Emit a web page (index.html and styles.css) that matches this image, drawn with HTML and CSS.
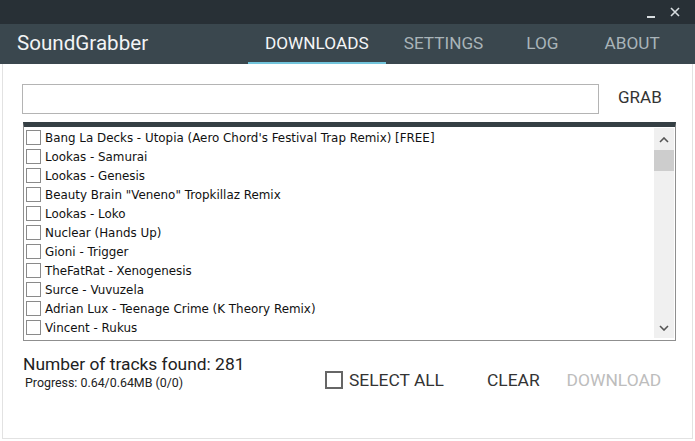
FILE: index.html
```html
<!DOCTYPE html>
<html>
<head>
<meta charset="utf-8">
<link rel="stylesheet" href="styles.css">
</head>
<body>
<div class="window">
  <div class="titlebar">
    <span class="ctl min"></span>
    <span class="ctl close">
      <svg width="10" height="10" viewBox="0 0 10 10"><path d="M1 1 L9 9 M9 1 L1 9" stroke="#d8dde0" stroke-width="1.6" fill="none"/></svg>
    </span>
  </div>
  <div class="header">
    <div class="brand">SoundGrabber</div>
    <nav class="tabs">
      <div class="tab active">DOWNLOADS</div>
      <div class="tab">SETTINGS</div>
      <div class="tab">LOG</div>
      <div class="tab">ABOUT</div>
    </nav>
  </div>
  <div class="content">
    <div class="grab-row">
      <input class="url" type="text">
      <div class="grab">GRAB</div>
    </div>
    <div class="list">
      <div class="rows">
        <div class="row"><span class="cb"></span><span>Bang La Decks - Utopia (Aero Chord's Festival Trap Remix) [FREE]</span></div>
        <div class="row"><span class="cb"></span><span>Lookas - Samurai</span></div>
        <div class="row"><span class="cb"></span><span>Lookas - Genesis</span></div>
        <div class="row"><span class="cb"></span><span>Beauty Brain "Veneno" Tropkillaz Remix</span></div>
        <div class="row"><span class="cb"></span><span>Lookas - Loko</span></div>
        <div class="row"><span class="cb"></span><span>Nuclear (Hands Up)</span></div>
        <div class="row"><span class="cb"></span><span>Gioni - Trigger</span></div>
        <div class="row"><span class="cb"></span><span>TheFatRat - Xenogenesis</span></div>
        <div class="row"><span class="cb"></span><span>Surce - Vuvuzela</span></div>
        <div class="row"><span class="cb"></span><span>Adrian Lux - Teenage Crime (K Theory Remix)</span></div>
        <div class="row"><span class="cb"></span><span>Vincent - Rukus</span></div>
      </div>
      <div class="scrollbar">
        <svg class="arrow up" width="10" height="6" viewBox="0 0 10 6"><path d="M1 5 L5 1 L9 5" stroke="#555" stroke-width="1.6" fill="none"/></svg>
        <div class="thumb"></div>
        <div class="track"></div>
        <svg class="arrow down" width="10" height="6" viewBox="0 0 10 6"><path d="M1 1 L5 5 L9 1" stroke="#555" stroke-width="1.6" fill="none"/></svg>
      </div>
    </div>
    <div class="footer">
      <div class="stats">
        <div class="count">Number of tracks found: 281</div>
        <div class="progress">Progress: 0.64/0.64MB (0/0)</div>
      </div>
      <div class="actions">
        <div class="selectall"><span class="bigcb"></span>SELECT ALL</div>
        <div class="btn">CLEAR</div>
        <div class="btn disabled">DOWNLOAD</div>
      </div>
    </div>
  </div>
</div>
</body>
</html>
```
FILE: styles.css
```css
html, body {
  margin: 0;
  padding: 0;
  background: #ffffff;
}
body {
  width: 695px;
  height: 441px;
  overflow: hidden;
  font-family: Roboto, "Noto Sans", sans-serif;
}
.window {
  width: 695px;
  height: 441px;
  display: flex;
  flex-direction: column;
  box-sizing: border-box;
}
.titlebar {
  height: 24px;
  background: #283036;
  display: flex;
  justify-content: flex-end;
  align-items: center;
  padding-right: 15px;
  gap: 15px;
}
.ctl {
  display: block;
  width: 10px;
  height: 10px;
  position: relative;
}
.ctl.min { width: 8px; top: 1px; }
.ctl.min::after {
  content: "";
  position: absolute;
  left: 0;
  right: 0;
  bottom: 0;
  height: 2px;
  background: #d8dde0;
}
.ctl.close svg { display: block; }
.header {
  height: 40px;
  background: #3a474e;
  display: flex;
  align-items: stretch;
}
.brand {
  color: #f2f4f5;
  font-size: 20.6px;
  padding-left: 17px;
  width: 231px;
  display: flex;
  align-items: center;
  padding-bottom: 2px;
}
.tabs {
  display: flex;
  align-items: stretch;
}
.tab {
  color: #a9b4b9;
  font-size: 17.2px;
  display: flex;
  align-items: center;
  padding: 0 17px;
  border-bottom: 2px solid transparent;
  box-sizing: border-box;
}
.tab.active {
  color: #f4f6f7;
  border-bottom-color: #72c4db;
}
.tab:nth-child(2) { padding-left: 18px; padding-right: 22px; }
.tab:nth-child(3) { padding-left: 21px; padding-right: 23px; }
.tab:nth-child(4) { padding-left: 23px; }
.content {
  flex: 1;
  border: 1px solid #e2e2e2;
  border-top: none;
  margin: 0 2px 2px 2px;
  display: flex;
  flex-direction: column;
  padding: 20px 19px 0 19px;
}
.grab-row {
  display: flex;
  align-items: center;
  height: 30px;
}
.url {
  width: 577px;
  height: 30px;
  box-sizing: border-box;
  border: 1px solid #b4b4b4;
  margin: 0;
  padding: 0;
  outline: none;
}
.grab {
  margin-left: 19px;
  font-size: 17px;
  color: #333;
  margin-top: -4px;
}
.list {
  margin-top: 8px;
  width: 653px;
  height: 219px;
  box-sizing: border-box;
  border: 1px solid #8f8f8f;
  border-top: 5px solid #353f44;
  display: flex;
  margin-left: 1px;
}
.rows {
  flex: 1;
  padding-top: 1px;
  font-family: "DejaVu Sans", sans-serif;
  font-size: 11.9px;
  color: #111;
}
.row {
  height: 19px;
  display: flex;
  align-items: center;
  padding-left: 2px;
}
.cb {
  width: 15px;
  height: 15px;
  box-sizing: border-box;
  border: 1px solid #8a8a8a;
  background: #fff;
  margin-right: 4px;
  flex: none;
}
.scrollbar {
  width: 20px;
  background: #f0f0f0;
  margin: 1px 1px 2px 0;
  display: flex;
  flex-direction: column;
  align-items: center;
}
.arrow { display: block; }
.arrow.up { margin: 9px 0 7px; }
.arrow.down { margin: 0 0 7px; }
.thumb {
  width: 20px;
  height: 21px;
  background: #cdcdcd;
}
.track { flex: 1; }
.footer {
  display: flex;
  align-items: flex-start;
  margin-top: 13px;
}
.stats {
  width: 302px;
  padding-left: 1px;
}
.count {
  font-size: 17.4px;
  color: #222;
  line-height: 21px;
}
.progress {
  font-size: 12.4px;
  color: #222;
  margin-left: 2px;
  line-height: 15px;
}
.actions {
  display: flex;
  align-items: center;
  margin-top: 16px;
  font-size: 17.4px;
  color: #333;
}
.selectall {
  display: flex;
  align-items: center;
}
.bigcb {
  width: 18px;
  height: 18px;
  box-sizing: border-box;
  border: 2px solid #666;
  margin-right: 6px;
}
.btn { margin-left: 43px; }
.btn.disabled { margin-left: 27px; color: #bdbdbd; }
```
